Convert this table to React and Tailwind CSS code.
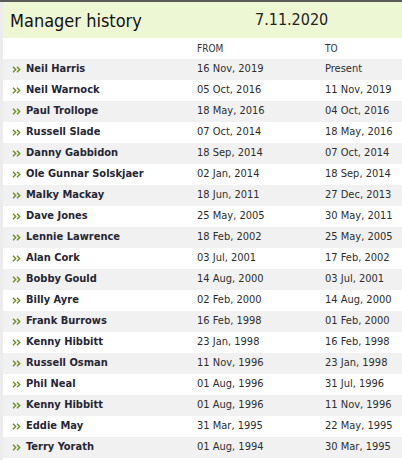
const managers = [
  ["Neil Harris", "16 Nov, 2019", "Present"],
  ["Neil Warnock", "05 Oct, 2016", "11 Nov, 2019"],
  ["Paul Trollope", "18 May, 2016", "04 Oct, 2016"],
  ["Russell Slade", "07 Oct, 2014", "18 May, 2016"],
  ["Danny Gabbidon", "18 Sep, 2014", "07 Oct, 2014"],
  ["Ole Gunnar Solskjaer", "02 Jan, 2014", "18 Sep, 2014"],
  ["Malky Mackay", "18 Jun, 2011", "27 Dec, 2013"],
  ["Dave Jones", "25 May, 2005", "30 May, 2011"],
  ["Lennie Lawrence", "18 Feb, 2002", "25 May, 2005"],
  ["Alan Cork", "03 Jul, 2001", "17 Feb, 2002"],
  ["Bobby Gould", "14 Aug, 2000", "03 Jul, 2001"],
  ["Billy Ayre", "02 Feb, 2000", "14 Aug, 2000"],
  ["Frank Burrows", "16 Feb, 1998", "01 Feb, 2000"],
  ["Kenny Hibbitt", "23 Jan, 1998", "16 Feb, 1998"],
  ["Russell Osman", "11 Nov, 1996", "23 Jan, 1998"],
  ["Phil Neal", "01 Aug, 1996", "31 Jul, 1996"],
  ["Kenny Hibbitt", "01 Aug, 1996", "11 Nov, 1996"],
  ["Eddie May", "31 Mar, 1995", "22 May, 1995"],
  ["Terry Yorath", "01 Aug, 1994", "30 Mar, 1995"],
];

function Chevrons() {
  return (
    <svg width="9" height="7" viewBox="0 0 9 7" className="mr-[5px]">
      <path d="M1 0.8 L3.7 3.5 L1 6.2 M5 0.8 L7.7 3.5 L5 6.2" fill="none" stroke="#6b8e23" strokeWidth="1.4" />
    </svg>
  );
}

export default function App() {
  return (
    <div
      className="w-[402px] h-[460px] overflow-hidden bg-white border-t-2 border-[#5a5a5a] text-[#2e2e2e]"
      style={{ fontFamily: '"DejaVu Sans Condensed", "DejaVu Sans", sans-serif' }}
    >
      <div className="border-l-[3px] border-[#ececec] h-full">
        <div className="h-[36px] bg-[#eef7d3] flex items-center">
          <div className="w-[252px] pl-[7px] text-[18px] text-[#111]">Manager history</div>
          <div className="text-[16px] text-[#222]">7.11.2020</div>
        </div>
        <div className="h-[21px] flex items-center text-[10px] text-[#333]">
          <div className="w-[194px]" />
          <div className="w-[128px]">FROM</div>
          <div>TO</div>
        </div>
        {managers.map(([name, from, to], i) => (
          <div
            key={i}
            className={`h-[21px] flex items-center text-[11px] ${i % 2 === 0 ? "bg-[#f1f1f1]" : "bg-white"}`}
          >
            <div className="w-[194px] pl-[9px] flex items-center">
              <Chevrons />
              <span className="font-bold text-[#262633]">{name}</span>
            </div>
            <div className="w-[128px]">{from}</div>
            <div>{to}</div>
          </div>
        ))}
      </div>
    </div>
  );
}
